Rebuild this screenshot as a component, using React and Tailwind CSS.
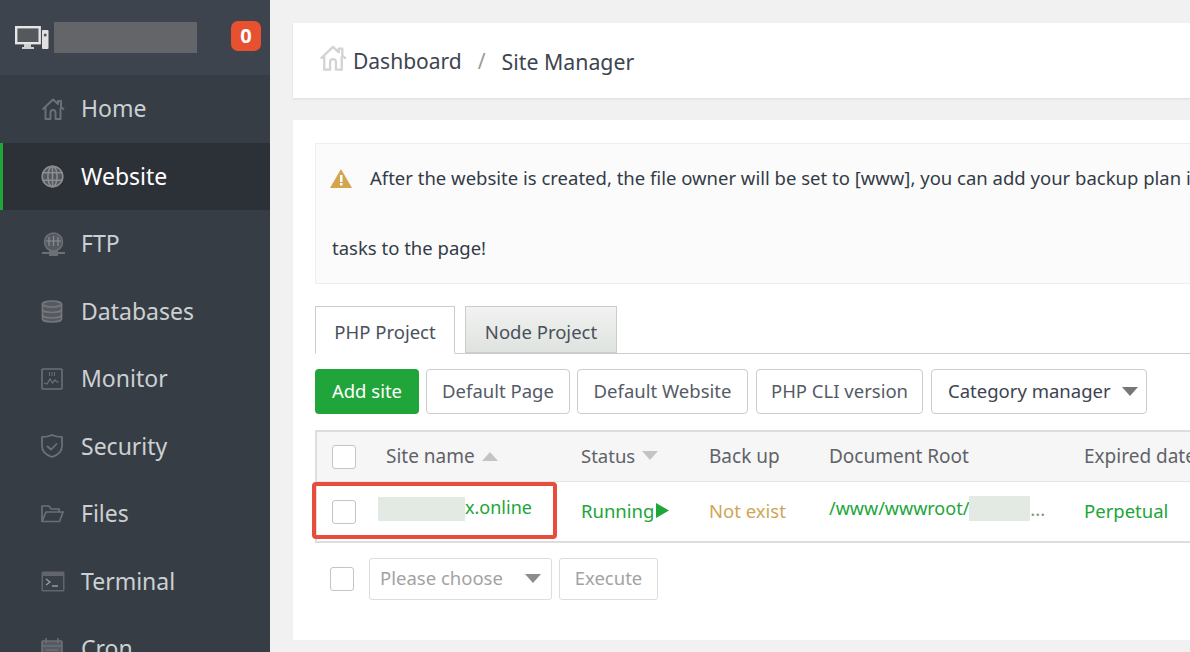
const HomeI = ({ c = "#6b7076", s = 24, w = 2 }) => (
  <svg width={s} height={s} viewBox="0 0 24 24" fill="none" stroke={c} strokeWidth={w} strokeLinejoin="round">
    <path d="M1.5 12.5 12 2.5l5 4.6V4h3v6l3 2.5" />
    <path d="M4.5 10.5V22h5v-6.5a2.5 2.5 0 0 1 5 0V22h5V10.5" />
  </svg>
);
const GlobeI = () => (
  <svg width="23" height="23" viewBox="0 0 24 24" fill="none" stroke="#8a8e92" strokeWidth="1.6">
    <circle cx="12" cy="12" r="10.8" fill="#55595e" />
    <ellipse cx="12" cy="12" rx="4.8" ry="10.8" />
    <path d="M12 1v22M1.5 8h21M1.5 16h21" />
  </svg>
);
const FtpI = () => (
  <svg width="25" height="24" viewBox="0 0 25 24" fill="none" stroke="#6b7076" strokeWidth="1.5">
    <circle cx="12.5" cy="10" r="9" fill="#565a60" />
    <path d="M8 5v9M12.5 4v10M17 5v9M5 9h15" stroke="#8a8e92" strokeWidth="1.2" />
    <path d="M1 21h23M9 20h7v3H9z" strokeWidth="1.8" />
  </svg>
);
const DbI = () => (
  <svg width="22" height="23" viewBox="0 0 22 23" fill="#565a60" stroke="#74787d" strokeWidth="1.7">
    <path d="M1.500 4v15c0 1.700 4.300 3 9.500 3s9.500-1.300 9.500-3V4" />
    <ellipse cx="11" cy="4" rx="9.500" ry="3" />
    <path fill="none" d="M1.500 9.500c0 1.700 4.300 3 9.500 3s9.500-1.300 9.500-3M1.500 15c0 1.700 4.300 3 9.500 3s9.500-1.300 9.500-3" />
  </svg>
);
const MonI = () => (
  <svg width="22" height="22" viewBox="0 0 22 22" fill="none" stroke="#6b7076" strokeWidth="1.6">
    <rect x="1" y="1" width="20" height="20" rx="1" />
    <path d="M3 15l3 1 3-5 2.500 4 2.500-3 2 2h2" strokeWidth="1.200" />
    <path d="M8.500 4v4M11 4v4M13.500 4v4" strokeWidth="1" />
  </svg>
);
const ShieldI = () => (
  <svg width="22" height="24" viewBox="0 0 22 24" fill="none" stroke="#6f7378" strokeWidth="1.7">
    <path d="M11 1c3 1.500 6 2 10 2v9c0 5-4 9-10 11C5 21 1 17 1 12V3c4 0 7-.5 10-2Z" />
    <path d="m6 12 4 3.500 6-6" />
  </svg>
);
const FolderI = () => (
  <svg width="23" height="19" viewBox="0 0 23 19" fill="none" stroke="#6b7076" strokeWidth="1.700">
    <path d="M1 17V2h7l2 3h8v3" />
    <path d="M1 17.500 5 8h17l-3.500 9.500H1Z" />
  </svg>
);
const TermI = () => (
  <svg width="24" height="21" viewBox="0 0 24 21" fill="none">
    <rect x=".5" y=".5" width="23" height="20" rx="1.500" fill="#62666c" />
    <rect x="2" y="5" width="20" height="14" fill="#3a4047" />
    <path d="m5 8 4 3-4 3" stroke="#9a9da1" strokeWidth="1.300" />
    <path d="M11 15h6" stroke="#9a9da1" strokeWidth="1.500" />
  </svg>
);
const CronI = () => (
  <svg width="22" height="22" viewBox="0 0 22 22" fill="none" stroke="#6b7076" strokeWidth="1.600">
    <rect x="1" y="3" width="20" height="18" rx="1" fill="#565a60" />
    <path d="M5 0v5M17 0v5M1 8h20M5 12h12M5 16h12" />
  </svg>
);
const Tri = ({ up = false, c = "#9a9a9a", w = 16, h = 9 }) => (
  <svg width={w} height={h} viewBox="0 0 16 9" fill={c}>
    <path d={up ? "M8 0l8 9H0z" : "M0 0h16L8 9z"} />
  </svg>
);
const NavItem = ({ icon, label, active }) => (
  <div className={`h-[67.5px] shrink-0 flex items-center border-l-[3px] ${active ? "border-[#20a53a] bg-[#2c3138] text-white" : "border-transparent text-[#ccd0d3]"}`}>
    <div className="w-[40px] ml-[38px] flex justify-start shrink-0">{icon}</div>
    <span className="text-[23px] leading-none">{label}</span>
  </div>
);
const Check = () => <span className="block w-6 h-6 rounded-[3px] border border-[#c4c4c4] bg-white" />;
const Btn = ({ children, w }) => (
  <button className={`h-[45px] ${w} rounded-[4px] border border-[#cccccc] bg-white text-[#555b66] text-[18.5px] leading-none whitespace-nowrap flex items-center justify-center shrink-0`}>{children}</button>
);

export default function App() {
  return (
    <div className="w-[1190px] h-[652px] overflow-hidden flex bg-[#f1f1f1] font-['Noto_Sans','Open_Sans',sans-serif]">
      <aside className="w-[270px] shrink-0 h-full overflow-hidden bg-[#363d44] flex flex-col">
        <div className="h-[75px] shrink-0 bg-[#3d444e] flex items-center pl-[15px] relative">
          <svg width="34" height="26" viewBox="0 0 34 26" fill="none">
            <rect x="1.200" y="2.200" width="23.500" height="16" fill="#55595e" stroke="#e6e6e6" strokeWidth="2.400" />
            <path d="M9 19h7v3h3v2H7v-2h2z" fill="#cfcfcf" />
            <rect x="27" y="5" width="6.500" height="19" rx="1" fill="#e0e0e0" />
            <circle cx="30.200" cy="10" r="1.500" fill="#555" />
          </svg>
          <div className="w-[143px] h-[31px] ml-[5px] bg-[#636569]" />
          <span className="ml-auto mr-[9px] -mt-[4px] w-[30px] h-[30px] rounded-[7px] bg-[#e8512f] text-white text-[20px] font-bold flex items-center justify-center">0</span>
        </div>
        <NavItem icon={<HomeI />} label="Home" />
        <NavItem icon={<GlobeI />} label="Website" active />
        <NavItem icon={<FtpI />} label="FTP" />
        <NavItem icon={<DbI />} label="Databases" />
        <NavItem icon={<MonI />} label="Monitor" />
        <NavItem icon={<ShieldI />} label="Security" />
        <NavItem icon={<FolderI />} label="Files" />
        <NavItem icon={<TermI />} label="Terminal" />
        <NavItem icon={<CronI />} label="Cron" />
      </aside>

      <main className="flex-1 min-w-0 pl-[23px] pt-[23px] flex flex-col gap-[22px]">
        <div className="h-[75px] bg-white shadow-[0_1px_2px_#d5ddd8] flex items-center pl-[26px] text-[21px] text-[#3d4450]">
          <span className="mr-[6px] -mt-[6px]"><HomeI c="#d2d4d4" s={28} w={2} /></span>
          <span className="mt-[2px]">Dashboard</span>
          <span className="mx-[16px] mt-[2px] text-[#9a9a9a]">/</span>
          <span className="mt-[2px] text-[21.3px]">Site Manager</span>
        </div>

        <section className="h-[520px] bg-white pl-[22px] pt-[23px]">
          <div className="w-[1000px] h-[141px] bg-[#fbfbfb] border border-[#eeeeee] pl-[16px] pt-[19px] text-[18.5px] text-[#333b47]">
            <div className="h-[30px] flex items-center whitespace-nowrap">
              <svg width="22" height="19" viewBox="0 0 22 19" className="-ml-[2px] mr-[18px] shrink-0">
                <path d="M11 0l11 19H0z" fill="#d4a44f" />
                <rect x="10" y="6" width="2.500" height="7" fill="#fff" />
                <rect x="10" y="14" width="2.500" height="2.500" fill="#fff" />
              </svg>
              After the website is created, the file owner will be set to [www], you can add your backup plan in the
            </div>
            <div className="mt-[40px] h-[30px] flex items-center">tasks to the page!</div>
          </div>

          <div className="mt-[22px] h-[48px] flex gap-[10px] border-b border-[#cccccc] text-[18.5px] text-[#4a505a]">
            <div className="w-[140px] h-[48px] pt-[4px] border border-[#cccccc] border-b-white bg-white flex items-center justify-center">PHP Project</div>
            <div className="w-[152px] h-[47px] pt-[4px] border border-[#cccccc] bg-gradient-to-b from-[#f1f2f1] to-[#dfe3df] flex items-center justify-center">Node Project</div>
          </div>

          <div className="mt-[15px] flex gap-[7px]">
            <button className="h-[45px] w-[104px] rounded-[4px] bg-[#20a53a] text-white text-[18.5px] leading-none whitespace-nowrap flex items-center justify-center shrink-0">Add site</button>
            <Btn w="w-[144px]">Default Page</Btn>
            <Btn w="w-[171px]">Default Website</Btn>
            <Btn w="w-[167px] ml-px">PHP CLI version</Btn>
            <button className="h-[45px] w-[216px] ml-px rounded-[4px] border border-[#cccccc] bg-white text-[#3d4450] text-[18.5px] leading-none whitespace-nowrap flex items-center pl-[16px] shrink-0">
              Category manager
              <span className="ml-[11px]"><Tri c="#777777" /></span>
            </button>
          </div>

          <div className="relative mt-[16px] w-[1000px] border-t-[2px] border-b-[2px] border-l-[2px] border-[#dddddd] text-[18.5px]">
            <div className="h-[50px] bg-[#f6f6f6] border-b border-[#e4e8e4] grid grid-cols-[55px_194px_128px_120px_255px_1fr] items-center text-[#5f6368]">
              <div className="pl-[15px]"><Check /></div>
              <div className="pl-[14px] flex items-center gap-[7px] text-[19px]">Site name <Tri up c="#c4c4c4" /></div>
              <div className="pl-[15px] -mt-[2px] flex items-center gap-[7px]">Status <Tri c="#c4c4c4" /></div>
              <div className="pl-[15px] text-[19px]">Back up</div>
              <div className="pl-[15px] text-[19px]">Document Root</div>
              <div className="pl-[15px] text-[19px] whitespace-nowrap">Expired date</div>
            </div>
            <div className="h-[59px] grid grid-cols-[55px_194px_128px_120px_255px_1fr] items-center">
              <div className="pl-[15px]"><Check /></div>
              <div className="pl-[6px] -mt-[6px] flex items-center text-[#20a53a]">
                <span className="w-[87px] h-[24px] bg-[#e3eae3]" /><span className="text-[18px] -mt-[2px]">x.online</span>
              </div>
              <div className="pl-[15px] -mt-[2px] flex items-center text-[#20a53a]">
                Running
                <svg width="13" height="15" viewBox="0 0 13 15" className="ml-[2px]" fill="#20a53a"><path d="M0 0l13 7.500L0 15z" /></svg>
              </div>
              <div className="pl-[15px] -mt-[2px] text-[#cfa658] whitespace-nowrap">Not exist</div>
              <div className="pl-[15px] -mt-[6px] flex items-center text-[#20a53a] whitespace-nowrap">
                <span className="text-[18px]">/www/wwwroot/</span>
                <span className="w-[61px] h-[25px] bg-[#e3eae3]" />
                <span className="text-[#7a9a80]">...</span>
              </div>
              <div className="pl-[15px] -mt-[2px] text-[#20a53a]">Perpetual</div>
            </div>
            <div className="absolute left-[-5px] top-[50px] w-[245px] h-[57px] border-[4px] border-[#e74c3c] rounded-[4px] pointer-events-none" />
          </div>

          <div className="mt-[15px] flex items-center">
            <div className="ml-[15px]"><Check /></div>
            <div className="ml-[15px] w-[183px] h-[42px] pb-[2px] rounded-[3px] border border-[#dddddd] flex items-center pl-[10px] text-[18.5px] text-[#a3a3a3] whitespace-nowrap">
              Please choose
              <span className="ml-[22px]"><Tri c="#8c8c8c" /></span>
            </div>
            <div className="ml-[7px] w-[99px] h-[42px] pb-[2px] rounded-[3px] border border-[#dddddd] flex items-center justify-center text-[18.5px] text-[#a3a3a3]">Execute</div>
          </div>
        </section>
      </main>
    </div>
  );
}
